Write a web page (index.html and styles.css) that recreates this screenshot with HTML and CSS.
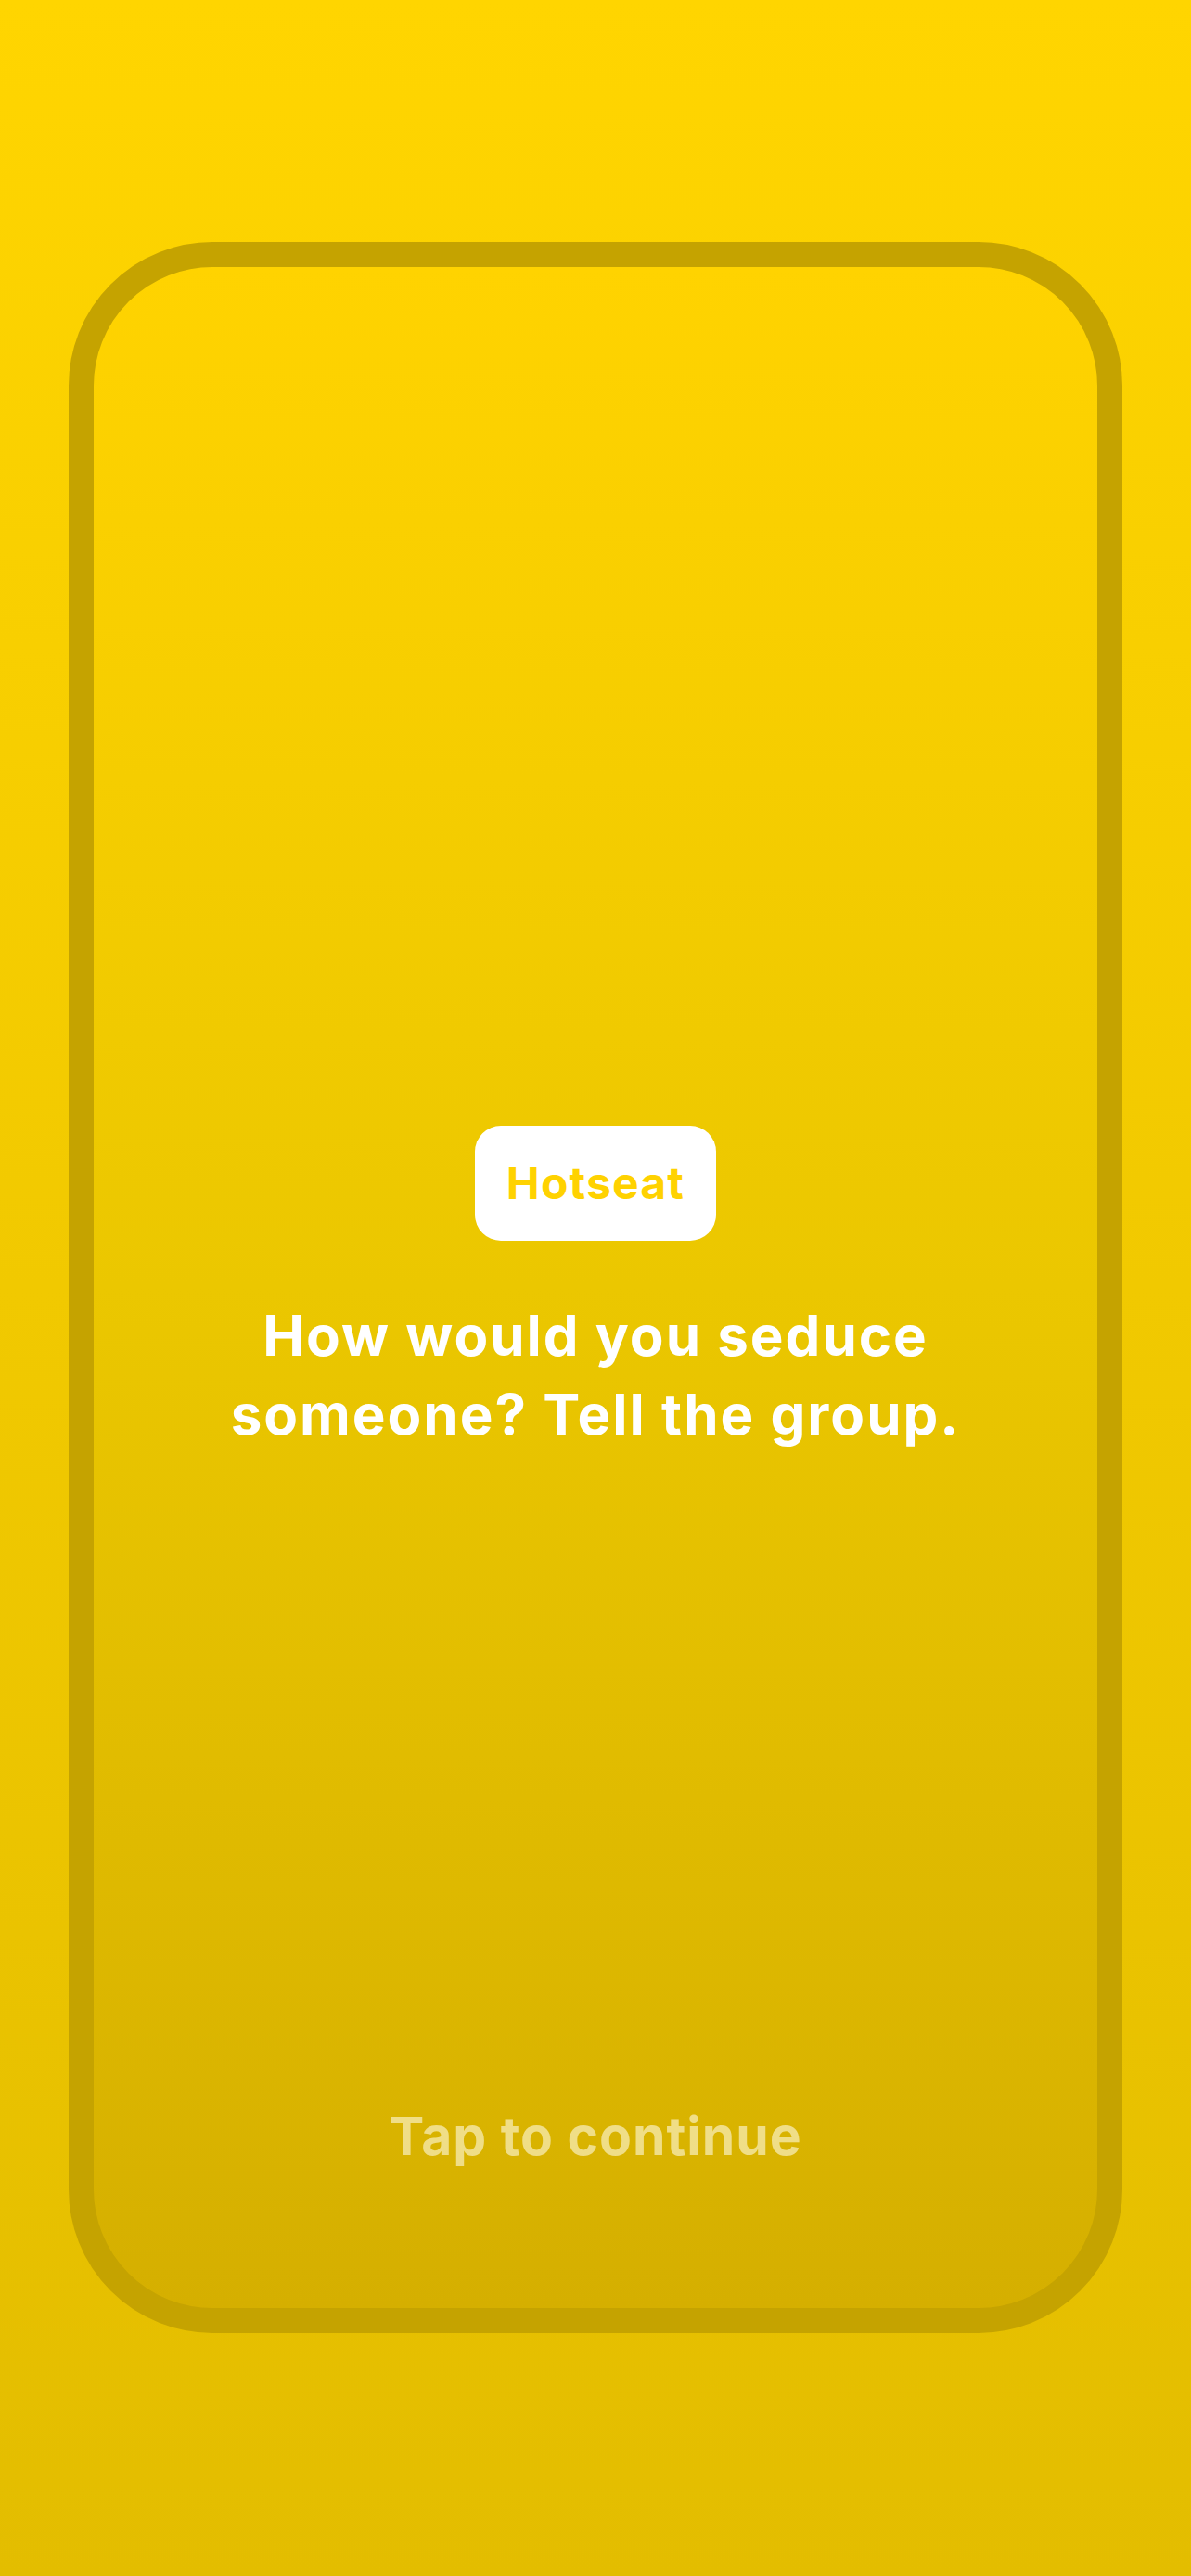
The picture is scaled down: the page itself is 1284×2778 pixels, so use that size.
FILE: index.html
```html
<!DOCTYPE html>
<html lang="en">
<head>
    <meta charset="UTF-8">
    <meta name="viewport" content="width=device-width, initial-scale=1.0">
    <title>Hotseat</title>
    <link rel="stylesheet" href="styles.css">
</head>
<body>
    <div class="screen">
        <div class="card">
            <div class="prompt">
                <div class="badge">Hotseat</div>
                <h1 class="question">How would you seduce<br>someone? Tell the group.</h1>
            </div>
            <div class="hint">Tap to continue</div>
        </div>
    </div>
</body>
</html>
```

FILE: styles.css
```css
body {
    margin: 0;
    font-family: 'Inter', 'Noto Sans', sans-serif;
    background: linear-gradient(180deg, #ffd500 0%, #e3bd00 100%);
    min-height: 100vh;
}
.screen {
    box-sizing: border-box;
    height: 100vh;
    padding: 261px 74px 262px;
}
.card {
    box-sizing: border-box;
    height: 100%;
    border: 27px solid #c5a300;
    border-radius: 155px;
    background: linear-gradient(180deg, #ffd300 0%, #ebc700 50%, #d5af00 100%);
    display: grid;
    grid-template-rows: 1fr auto 1fr;
}
.prompt {
    grid-row: 2;
    padding-top: 4px;
    display: flex;
    flex-direction: column;
    align-items: center;
    gap: 60px;
}
.badge {
    box-sizing: border-box;
    height: 124px;
    padding: 0 34px;
    border-radius: 28px;
    background-color: white;
    color: #ffd200;
    font-size: 48px;
    font-weight: 700;
    letter-spacing: 1.2px;
    display: flex;
    align-items: center;
}
.question {
    margin: 0;
    color: white;
    font-size: 60px;
    font-weight: 700;
    line-height: 85px;
    letter-spacing: 2px;
    text-align: center;
}
.hint {
    grid-row: 3;
    align-self: end;
    padding-bottom: 152px;
    color: rgba(255, 250, 225, 0.6);
    font-size: 57px;
    font-weight: 700;
    line-height: 66px;
    letter-spacing: 1px;
    text-align: center;
}
```
